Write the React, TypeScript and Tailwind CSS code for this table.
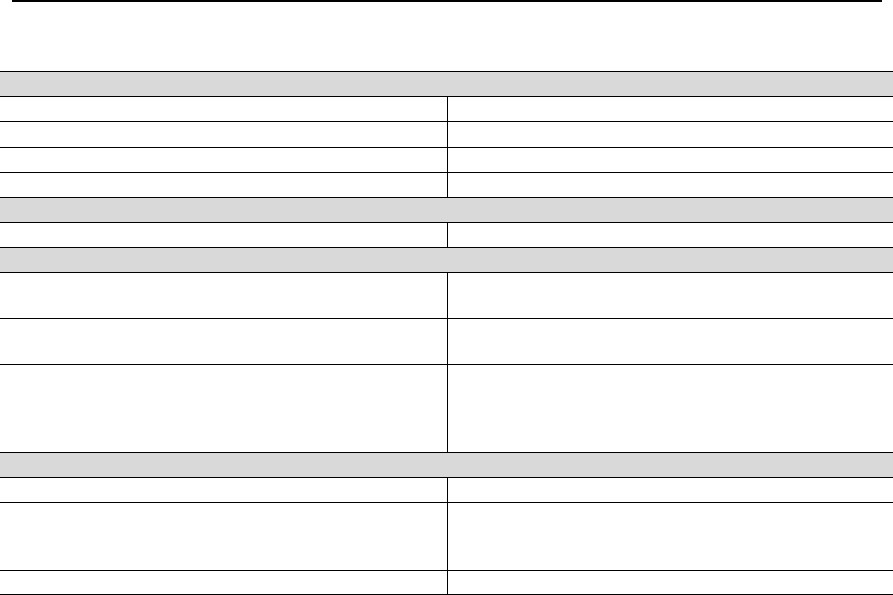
import React from "react";

type Row = { kind: "h" | "r"; h: number };

const rows: Row[] = [
  { kind: "h", h: 25 },
  { kind: "r", h: 25 },
  { kind: "r", h: 26 },
  { kind: "r", h: 25 },
  { kind: "r", h: 25 },
  { kind: "h", h: 25 },
  { kind: "r", h: 25 },
  { kind: "h", h: 25 },
  { kind: "r", h: 46 },
  { kind: "r", h: 46 },
  { kind: "r", h: 88 },
  { kind: "h", h: 25 },
  { kind: "r", h: 25 },
  { kind: "r", h: 68 },
  { kind: "r", h: 24 },
];

export default function App() {
  return (
    <div className="w-[893px] h-[595px] bg-white overflow-hidden" style={{ fontFamily: '"Liberation Sans", Arial, sans-serif' }}>
      <div className="ml-[12px] w-[870px] h-[2px] bg-black" />
      <div className="h-[69px]" />
      <div className="w-[893px] border-t border-black flex flex-col">
        {rows.map((r, i) =>
          r.kind === "h" ? (
            <div key={i} className="w-full bg-[#d9d9d9] border-b border-black" style={{ height: r.h }} />
          ) : (
            <div key={i} className="w-full flex border-b border-black" style={{ height: r.h }}>
              <div className="w-[448px] h-full border-r border-black" />
              <div className="flex-1 h-full" />
            </div>
          )
        )}
      </div>
    </div>
  );
}
